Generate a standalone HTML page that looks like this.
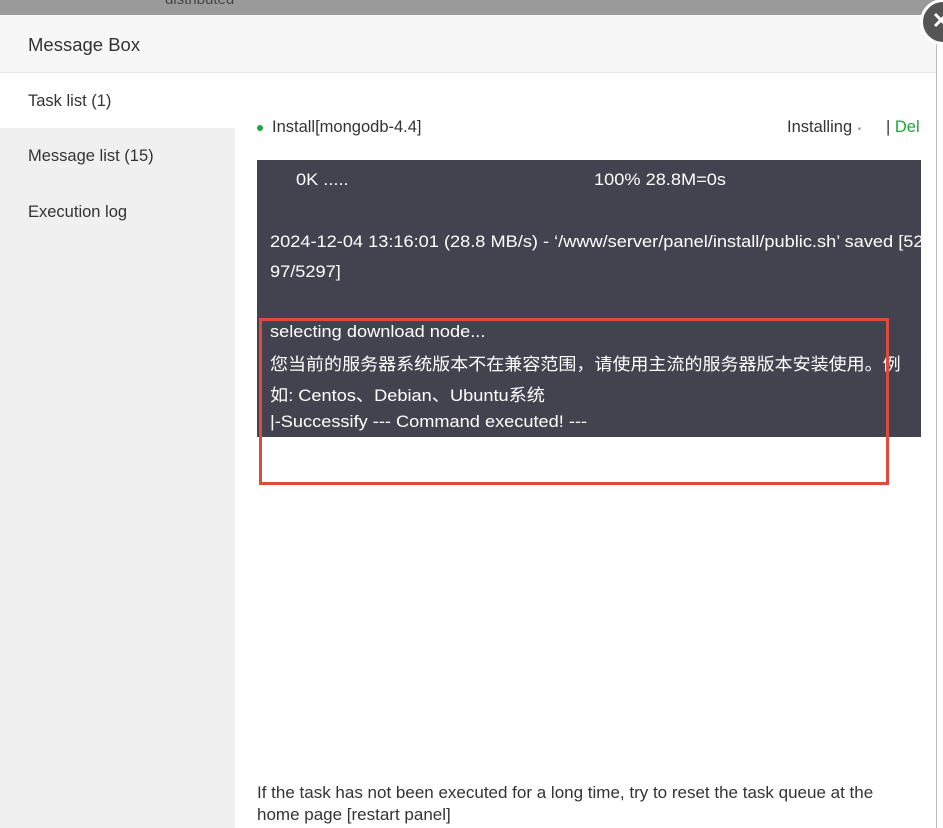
<!DOCTYPE html>
<html><head><meta charset="utf-8"><style>
body{margin:0;width:943px;height:828px;overflow:hidden;position:relative;background:#fff;font-family:"Liberation Sans","Noto Sans CJK SC",sans-serif;color:#333}
div,span{position:absolute;white-space:nowrap}
.t{font-size:16.5px}
.w{color:#fff;font-size:17px;transform:scaleX(1.07);transform-origin:0 0}
</style></head><body>
<div style="left:0;top:0;width:943px;height:15px;background:#9a9a9a"></div>
<div style="left:165px;top:-9px;font-size:15px;color:#444">distributed</div>
<div style="left:0;top:15px;width:937px;height:57px;background:#f7f7f7;border-bottom:1px solid #e8e8e8"></div>
<div style="left:28px;top:34px;font-size:18.5px;color:#333">Message Box</div>
<div style="left:936px;top:15px;width:1px;height:813px;background:#bbb"></div>
<div style="left:0;top:73px;width:235px;height:755px;background:#f0f0f0"></div>
<div style="left:0;top:73px;width:235px;height:55px;background:#fff"></div>
<div class="t" style="left:28px;top:92px;color:#333">Task list (1)</div>
<div class="t" style="left:28px;top:147px;color:#333">Message list (15)</div>
<div class="t" style="left:28px;top:203px;color:#333">Execution log</div>
<div style="left:257px;top:125px;width:6px;height:6px;border-radius:50%;background:#20a53a"></div>
<div class="t" style="left:272px;top:118px;color:#333">Install[mongodb-4.4]</div>
<div class="t" style="left:787px;top:118px;color:#333">Installing<span style="position:static;font-size:10px;color:#999"> &nbsp;•</span></div>
<div class="t" style="left:886px;top:118px;color:#333">| <span style="position:static;color:#20a53a">Del</span></div>
<div style="left:257px;top:160px;width:664px;height:277px;background:#43424f"></div>
<div class="w" style="left:296px;top:170px">0K .....</div>
<div class="w" style="left:594px;top:170px">100% 28.8M=0s</div>
<div class="w" style="left:270px;top:232px">2024-12-04 13:16:01 (28.8 MB/s) - ‘/www/server/panel/install/public.sh’ saved [52</div>
<div class="w" style="left:270px;top:262px">97/5297]</div>
<div class="w" style="left:270px;top:322px">selecting download node...</div>
<div class="w" style="left:270px;top:350px;transform:scaleX(1.06)">您当前的服务器系统版本不在兼容范围，请使用主流的服务器版本安装使用。例</div>
<div class="w" style="left:270px;top:381px">如: Centos、Debian、Ubuntu系统</div>
<div class="w" style="left:270px;top:412px">|-Successify --- Command executed! ---</div>
<div style="left:259px;top:318px;width:624px;height:161px;border:3px solid #dd4b3e"></div>
<div style="left:257px;top:782px;font-size:17px;color:#333;line-height:22px;white-space:normal;width:650px">If the task has not been executed for a long time, try to reset the task queue at the home page [restart panel]</div>
<div style="left:920px;top:-1px;width:40px;height:40px;border-radius:50%;background:#555;border:3px solid #fff"></div>
<svg style="position:absolute;left:932px;top:11px" width="20" height="20"><path d="M3 3L15 15M15 3L3 15" stroke="#fff" stroke-width="3"/></svg>
</body></html>
